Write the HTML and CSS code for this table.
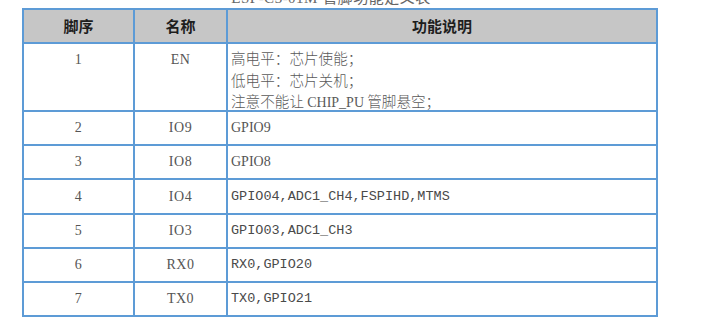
FILE: index.html
```html
<!DOCTYPE html>
<html lang="zh-CN">
<head>
<meta charset="utf-8">
<title>ESP-C3-01M 管脚功能定义表</title>
<link rel="stylesheet" href="styles.css">
</head>
<body>
<div class="page">
  <div class="caption">ESP-C3-01M 管脚功能定义表</div>
  <table class="pins">
    <thead>
      <tr class="head">
        <th class="c-no">脚序</th>
        <th class="c-name">名称</th>
        <th class="c-desc">功能说明</th>
      </tr>
    </thead>
    <tbody>
      <tr class="tall">
        <td class="c-no top">1</td>
        <td class="c-name top">EN</td>
        <td class="c-desc multi"><div class="lines">高电平：芯片使能；<br>低电平：芯片关机；<br>注意不能让 <span class="lat">CHIP_PU</span> 管脚悬空；</div></td>
      </tr>
      <tr class="r34">
        <td class="c-no">2</td>
        <td class="c-name">IO9</td>
        <td class="c-desc serif">GPIO9</td>
      </tr>
      <tr class="r34">
        <td class="c-no">3</td>
        <td class="c-name">IO8</td>
        <td class="c-desc serif">GPIO8</td>
      </tr>
      <tr class="r35">
        <td class="c-no">4</td>
        <td class="c-name">IO4</td>
        <td class="c-desc mono">GPIO04,ADC1_CH4,FSPIHD,MTMS</td>
      </tr>
      <tr class="r34">
        <td class="c-no">5</td>
        <td class="c-name">IO3</td>
        <td class="c-desc mono">GPIO03,ADC1_CH3</td>
      </tr>
      <tr class="r34">
        <td class="c-no">6</td>
        <td class="c-name">RX0</td>
        <td class="c-desc mono">RX0,GPIO20</td>
      </tr>
      <tr class="r34">
        <td class="c-no">7</td>
        <td class="c-name">TX0</td>
        <td class="c-desc mono">TX0,GPIO21</td>
      </tr>
    </tbody>
  </table>
</div>
</body>
</html>
```

FILE: styles.css
```css
html, body {
  margin: 0;
  padding: 0;
  background: #ffffff;
}

body {
  width: 703px;
  height: 331px;
  overflow: hidden;
  font-family: "Liberation Serif", "Noto Sans CJK SC", serif;
  color: #555555;
}

.page {
  padding-left: 22px;
}

.caption {
  width: 618px;
  text-align: center;
  font-size: 15px;
  line-height: 15px;
  height: 15px;
  margin-top: -9px;
  color: #666666;
  letter-spacing: 0.5px;
}

.pins {
  margin-top: 2px;
  border-collapse: collapse;
  width: 636px;
  table-layout: fixed;
}

.pins th,
.pins td {
  border: 2px solid #5d9bd6;
  padding: 0;
  vertical-align: middle;
}

.c-no { width: 109px; }
.c-name { width: 91px; }
.c-desc { width: auto; }

.head { height: 34px; }
.tall { height: 68px; }
.r34 { height: 34px; }
.r35 { height: 35px; }

.head th {
  background: #c6c6c6;
  color: #1e1e1e;
  font-family: "Noto Sans CJK SC", sans-serif;
  font-weight: 700;
  font-size: 15px;
  line-height: 20px;
  text-align: center;
}

.pins td.c-no,
.pins td.c-name {
  text-align: center;
  font-size: 14px;
  line-height: 18px;
  letter-spacing: 0.5px;
}

.pins td.c-desc {
  text-align: left;
  padding-left: 3px;
  line-height: 18px;
}

.pins td.top {
  vertical-align: top;
  padding-top: 7px;
}

.pins td.multi {
  vertical-align: top;
  padding-top: 3px;
  font-family: "Noto Sans CJK SC", sans-serif;
  font-size: 14.6px;
  line-height: 21.5px;
  color: #5a5a5a;
  font-weight: 300;
}

.lines {
  height: 62px;
}

.lat {
  font-family: "Liberation Serif", serif;
  font-size: 14px;
  font-weight: 400;
}

.serif {
  font-size: 14px;
}

.mono {
  font-family: "Liberation Mono", monospace;
  font-size: 13.5px;
  color: #4a4a4a;
}
```
